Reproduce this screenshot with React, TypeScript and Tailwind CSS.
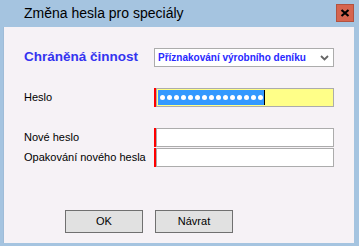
import React from 'react';

const Field: React.FC<{ children?: React.ReactNode; yellow?: boolean }> = ({ children, yellow }) => (
  <div className="flex h-[19px] w-[180px] shrink-0">
    <div className="w-[2px] h-full bg-[#ff0000]" />
    <div
      className={`flex-1 h-full border border-[#acacac] flex items-center ${
        yellow ? 'bg-[#ffff88]' : 'bg-white'
      }`}
    >
      {children}
    </div>
  </div>
);

export default function App() {
  const dots = Array.from({ length: 15 });
  return (
    <div className="w-[359px] h-[246px] bg-[#a5c4e0] flex flex-col" style={{ fontFamily: '"Liberation Sans", sans-serif' }}>
      {/* title bar */}
      <div className="h-[27px] flex items-start relative">
        <span className="pl-[24px] pt-[3px] text-[14px] leading-[20px] text-black whitespace-nowrap">
          Změna hesla pro speciály
        </span>
        <div className="ml-auto mr-[5px] mt-[4px] w-[18px] h-[18px] bg-[#d6654f] border border-[#b3523f] flex items-center justify-center">
          <svg width="10" height="8" viewBox="0 0 10 8">
            <path d="M1.5 1 L8.5 7 M8.5 1 L1.5 7" stroke="#000" strokeWidth="2.2" />
          </svg>
        </div>
      </div>

      {/* client */}
      <div className="ml-[3px] mr-[5px] h-[216px] bg-[#f6f2f6] border-l border-[#9fbcd8] pl-[20px] pt-[21px] text-[11px] text-black">
        <div className="flex items-center h-[19px]">
          <div className="w-[130px] shrink-0 whitespace-nowrap text-[13.5px] font-bold text-[#3434f0]">Chráněná činnost</div>
          <div className="w-[180px] shrink-0 h-[19px] border border-[#acacac] bg-white flex items-center pl-[3px] pr-[4px]">
            <span className="text-[10px] font-bold text-[#2828ff] whitespace-nowrap">
              Příznakování výrobního deníku
            </span>
            <svg className="ml-auto" width="9" height="6" viewBox="0 0 9 6">
              <path d="M1 1 L4.5 4.5 L8 1" stroke="#666" strokeWidth="1.8" fill="none" />
            </svg>
          </div>
        </div>

        <div className="flex items-center h-[19px] mt-[21px]">
          <div className="w-[130px] shrink-0 whitespace-nowrap">Heslo</div>
          <Field yellow>
            <div className="ml-[1px] h-[15px] bg-[#3399ff] flex items-center gap-[2px] pl-[2px] pr-[1px]">
              {dots.map((_, i) => (
                <div key={i} className="w-[5px] h-[5px] rounded-full bg-white" />
              ))}
            </div>
            <div className="w-[1px] h-[15px] bg-black" />
          </Field>
        </div>

        <div className="flex items-center h-[19px] mt-[21px]">
          <div className="w-[130px] shrink-0 whitespace-nowrap">Nové heslo</div>
          <Field />
        </div>
        <div className="flex items-center h-[19px] mt-[1px]">
          <div className="w-[130px] shrink-0 whitespace-nowrap">Opakování nového hesla</div>
          <Field />
        </div>

        <div className="flex gap-[12px] mt-[43px] ml-[41px]">
          <button className="w-[78px] h-[23px] bg-[#e1e1e1] border border-[#707070] text-[11px] text-black">OK</button>
          <button className="w-[78px] h-[23px] bg-[#e1e1e1] border border-[#707070] text-[11px] text-black">Návrat</button>
        </div>
      </div>
    </div>
  );
}
